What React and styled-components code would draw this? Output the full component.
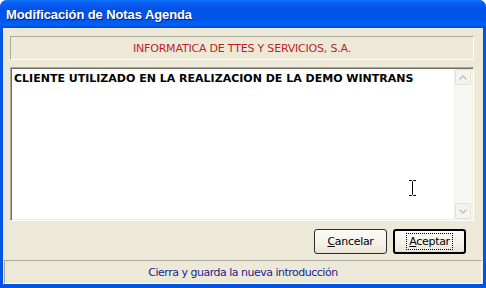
import React from 'react'
import styled, { createGlobalStyle } from 'styled-components'

const GlobalStyle = createGlobalStyle`
  html, body {
    margin: 0;
    padding: 0;
    background: #ffffff;
  }
  body {
    width: 486px;
    height: 288px;
    overflow: hidden;
    font-family: Tahoma, "DejaVu Sans", "Liberation Sans", sans-serif;
  }
`

const Window = styled.div`
  display: flex;
  flex-direction: column;
  width: 486px;
  height: 288px;
  box-sizing: border-box;
  background: #0054e3;
  border-radius: 7px 7px 0 0;
  overflow: hidden;
`

const TitleBar = styled.div`
  display: flex;
  align-items: center;
  height: 28px;
  flex-shrink: 0;
  padding: 1px 0 0 6px;
  box-sizing: border-box;
  background: linear-gradient(
    180deg,
    #0a7bff 0%,
    #0f5df2 10%,
    #0052e8 35%,
    #0055ea 70%,
    #0162f7 88%,
    #0049d8 100%
  );
  color: #ffffff;
  font-family: "Liberation Sans", Arial, sans-serif;
  font-weight: bold;
  font-size: 13px;
  letter-spacing: -0.1px;
  text-shadow: 1px 1px 0 #0a1f7a;
`

const Frame = styled.div`
  flex: 1;
  display: flex;
  flex-direction: column;
  margin: 0 3px 4px 3px;
  background: #ece9d8;
  padding: 8px 0 0 0;
`

const Content = styled.div`
  display: flex;
  flex-direction: column;
  padding: 0 9px 0 7px;
`

const CompanyPanel = styled.div`
  height: 24px;
  box-sizing: border-box;
  display: flex;
  align-items: center;
  justify-content: center;
  border-top: 1px solid #aca899;
  border-left: 1px solid #aca899;
  border-right: 1px solid #ffffff;
  border-bottom: 1px solid #ffffff;
  color: #be1e26;
  font-family: "DejaVu Sans", sans-serif;
  font-size: 11px;
  letter-spacing: -0.2px;
`

const Memo = styled.div`
  position: relative;
  margin-top: 7px;
  height: 154px;
  box-sizing: border-box;
  display: flex;
  background: #ffffff;
  border-top: 1px solid #aca899;
  border-left: 1px solid #aca899;
  border-right: 1px solid #ffffff;
  border-bottom: 1px solid #ffffff;
  box-shadow: inset 1px 1px 0 #716f64, inset -1px -1px 0 #f1efe2;
`

const MemoText = styled.div`
  flex: 1;
  padding: 4px 0 0 3px;
  font-family: "DejaVu Sans", sans-serif;
  font-weight: bold;
  font-size: 11px;
  color: #000000;
`

const ScrollBar = styled.div`
  width: 17px;
  margin: 1px 1px 1px 0;
  display: flex;
  flex-direction: column;
  justify-content: space-between;
  background: #f7f7f3;
  border-left: 1px solid #eeede5;
`

const ScrollButton = styled.div`
  width: 16px;
  height: 16px;
  box-sizing: border-box;
  display: flex;
  align-items: center;
  justify-content: center;
  background: #f3f3ef;
  border: 1px solid #e3e2da;
  border-radius: 2px;
`

const Cursor = styled.svg`
  position: absolute;
  left: 397px;
  top: 112px;
`

const ButtonRow = styled.div`
  display: flex;
  justify-content: flex-end;
  gap: 6px;
  margin-top: 8px;
  padding-right: 17px;
`

const Button = styled.div`
  width: 73px;
  height: 25px;
  box-sizing: border-box;
  display: flex;
  align-items: center;
  justify-content: center;
  background: linear-gradient(180deg, #fbfbf7 0%, #f1efe6 70%, #e6e3d4 100%);
  border: ${({ $default }) => ($default ? '2px solid #000000' : '1px solid #2b2b2b')};
  border-radius: 3px;
  font-family: "DejaVu Sans", sans-serif;
  font-size: 11px;
  letter-spacing: -0.3px;
  color: #000000;

  u {
    text-decoration: underline;
    text-underline-offset: 1px;
  }
`

const Focus = styled.span`
  padding: 1px 2px;
  outline: ${({ $focused }) => ($focused ? '1px dotted #000000' : 'none')};
`

const StatusBar = styled.div`
  margin: 6px 1px 0 1px;
  height: 24px;
  box-sizing: border-box;
  display: flex;
  align-items: center;
  justify-content: center;
  border-top: 1px solid #aca899;
  border-left: 1px solid #aca899;
  border-right: 1px solid #ffffff;
  border-bottom: 1px solid #ffffff;
  color: #1c1c8c;
  font-family: "DejaVu Sans", sans-serif;
  font-size: 11px;
  letter-spacing: -0.5px;
`

const Chevron = ({ up }) => (
  <svg width="8" height="5" viewBox="0 0 8 5">
    <path
      d={up ? 'M0.5 4.5 L4 1 L7.5 4.5' : 'M0.5 0.5 L4 4 L7.5 0.5'}
      fill="none"
      stroke="#c9c7ba"
      strokeWidth="1.6"
    />
  </svg>
)

const App = () => {
  return (
    <>
      <GlobalStyle />
      <Window>
        <TitleBar>Modificación de Notas Agenda</TitleBar>
        <Frame>
          <Content>
            <CompanyPanel>INFORMATICA DE TTES Y SERVICIOS, S.A.</CompanyPanel>
            <Memo>
              <MemoText>CLIENTE UTILIZADO EN LA REALIZACION DE LA DEMO WINTRANS</MemoText>
              <ScrollBar>
                <ScrollButton>
                  <Chevron up />
                </ScrollButton>
                <ScrollButton>
                  <Chevron />
                </ScrollButton>
              </ScrollBar>
              <Cursor width="9" height="16" viewBox="0 0 9 16">
                <path
                  d="M1 0.5 H3.5 L4.5 1.5 L5.5 0.5 H8 M4.5 1.5 V14.5 M1 15.5 H3.5 L4.5 14.5 L5.5 15.5 H8"
                  fill="none"
                  stroke="#000000"
                  strokeWidth="1"
                />
              </Cursor>
            </Memo>
          </Content>
          <ButtonRow>
            <Button>
              <span>
                <u>C</u>ancelar
              </span>
            </Button>
            <Button $default>
              <Focus $focused>
                <u>A</u>ceptar
              </Focus>
            </Button>
          </ButtonRow>
          <StatusBar>Cierra y guarda la nueva introducción</StatusBar>
        </Frame>
      </Window>
    </>
  )
}

export default App
